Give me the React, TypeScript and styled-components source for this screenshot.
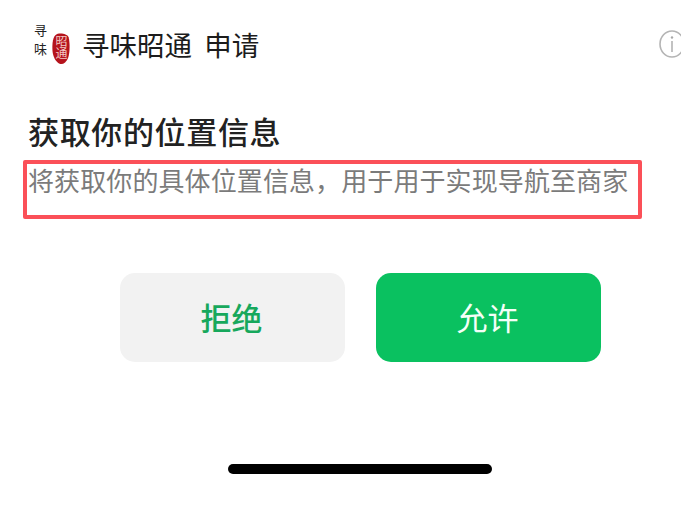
import React from "react";
import styled, { createGlobalStyle } from "styled-components";

const Global = createGlobalStyle`
  html, body { margin: 0; padding: 0; background: #fff; overflow: hidden; }
  body { font-family: "Noto Sans CJK SC", "Liberation Sans", sans-serif; }
`;
const Page = styled.div`
  width: 681px; height: 507px; overflow: hidden; display: flex; flex-direction: column; background: #fff;
`;
const Header = styled.header`
  display: flex; align-items: center; height: 42px; margin-top: 22px; padding-left: 33px;
`;
const Logo = styled.div`
  position: relative; width: 38px; height: 42px; flex: none; margin-right: 11px;
`;
const LogoWords = styled.span`
  position: absolute; left: 1px; top: 2px; writing-mode: vertical-rl;
  font-size: 13px; line-height: 1; letter-spacing: 6px; color: #222;
`;
const Seal = styled.svg`
  position: absolute; left: 19px; top: 11px; width: 18px; height: 32px;
`;
const SealWords = styled.span`
  position: absolute; left: 22px; top: 13px; writing-mode: vertical-rl;
  font-size: 12px; line-height: 1; letter-spacing: 0; color: #f3c9c4;
`;
const AppName = styled.h1`
  margin: 2px 0 0; font-size: 27.5px; font-weight: 400; color: #1c1c1c; line-height: 42px; white-space: pre; flex: 1;
`;
const InfoIcon = styled.svg`
  flex: none; width: 24px; height: 30px; margin-right: -2px; margin-top: 2px;
`;
const Title = styled.h2`
  margin: 45px 0 0 28px; font-size: 31px; font-weight: 500; line-height: 44px; color: #222; letter-spacing: .65px;
`;
const HighlightBox = styled.div`
  box-sizing: border-box; width: 619px; height: 59px; margin: 7px 0 0 23px;
  border: 4px solid #fb5058; border-radius: 2px; padding: 0 0 0 1px;
`;
const Description = styled.p`
  margin: 0; font-size: 26px; line-height: 32px; color: #7b7b7b; white-space: nowrap; letter-spacing: .1px;
`;
const Actions = styled.div`
  display: flex; gap: 31px; margin: 54px 0 0 120px;
`;
const Button = styled.button<{ $primary?: boolean }>`
  width: 225px; height: 89px; border: 0; border-radius: 15px; padding: 0 2px 2px 0;
  font-family: inherit; font-size: 31px; font-weight: ${p => (p.$primary ? 400 : 500)};
  background: ${p => (p.$primary ? "#0ac160" : "#f2f2f2")};
  color: ${p => (p.$primary ? "#f4fff8" : "#17a85c")};
`;
const HomeBar = styled.div`
  width: 264px; height: 10px; border-radius: 5px; background: #000; margin: 102px 0 0 228px;
`;

export default function App() {
  return (
    <Page>
      <Global />
      <Header>
        <Logo>
          <LogoWords>寻味</LogoWords>
          <Seal viewBox="0 0 19 33">
            <path d="M6 0.5 C10 -0.5 16 0.5 17.5 4 C19 10 19 20 17 26 C15 31 11 33.5 8 32 C4 30 1 25 0.5 18 C0 10 1 2 6 0.5 Z" fill="#b5131c" />
          </Seal>
          <SealWords>昭通</SealWords>
        </Logo>
        <AppName>寻味昭通  申请</AppName>
        <InfoIcon viewBox="0 0 24 30">
          <ellipse cx="13" cy="15" rx="12" ry="13" fill="none" stroke="#b4b4b4" strokeWidth="1.6" />
          <circle cx="13" cy="8.5" r="1.2" fill="#a8a8a8" />
          <rect x="12.2" y="12" width="1.6" height="11" fill="#b4b4b4" />
        </InfoIcon>
      </Header>
      <Title>获取你的位置信息</Title>
      <HighlightBox>
        <Description>将获取你的具体位置信息，用于用于实现导航至商家</Description>
      </HighlightBox>
      <Actions>
        <Button>拒绝</Button>
        <Button $primary>允许</Button>
      </Actions>
      <HomeBar />
    </Page>
  );
}
